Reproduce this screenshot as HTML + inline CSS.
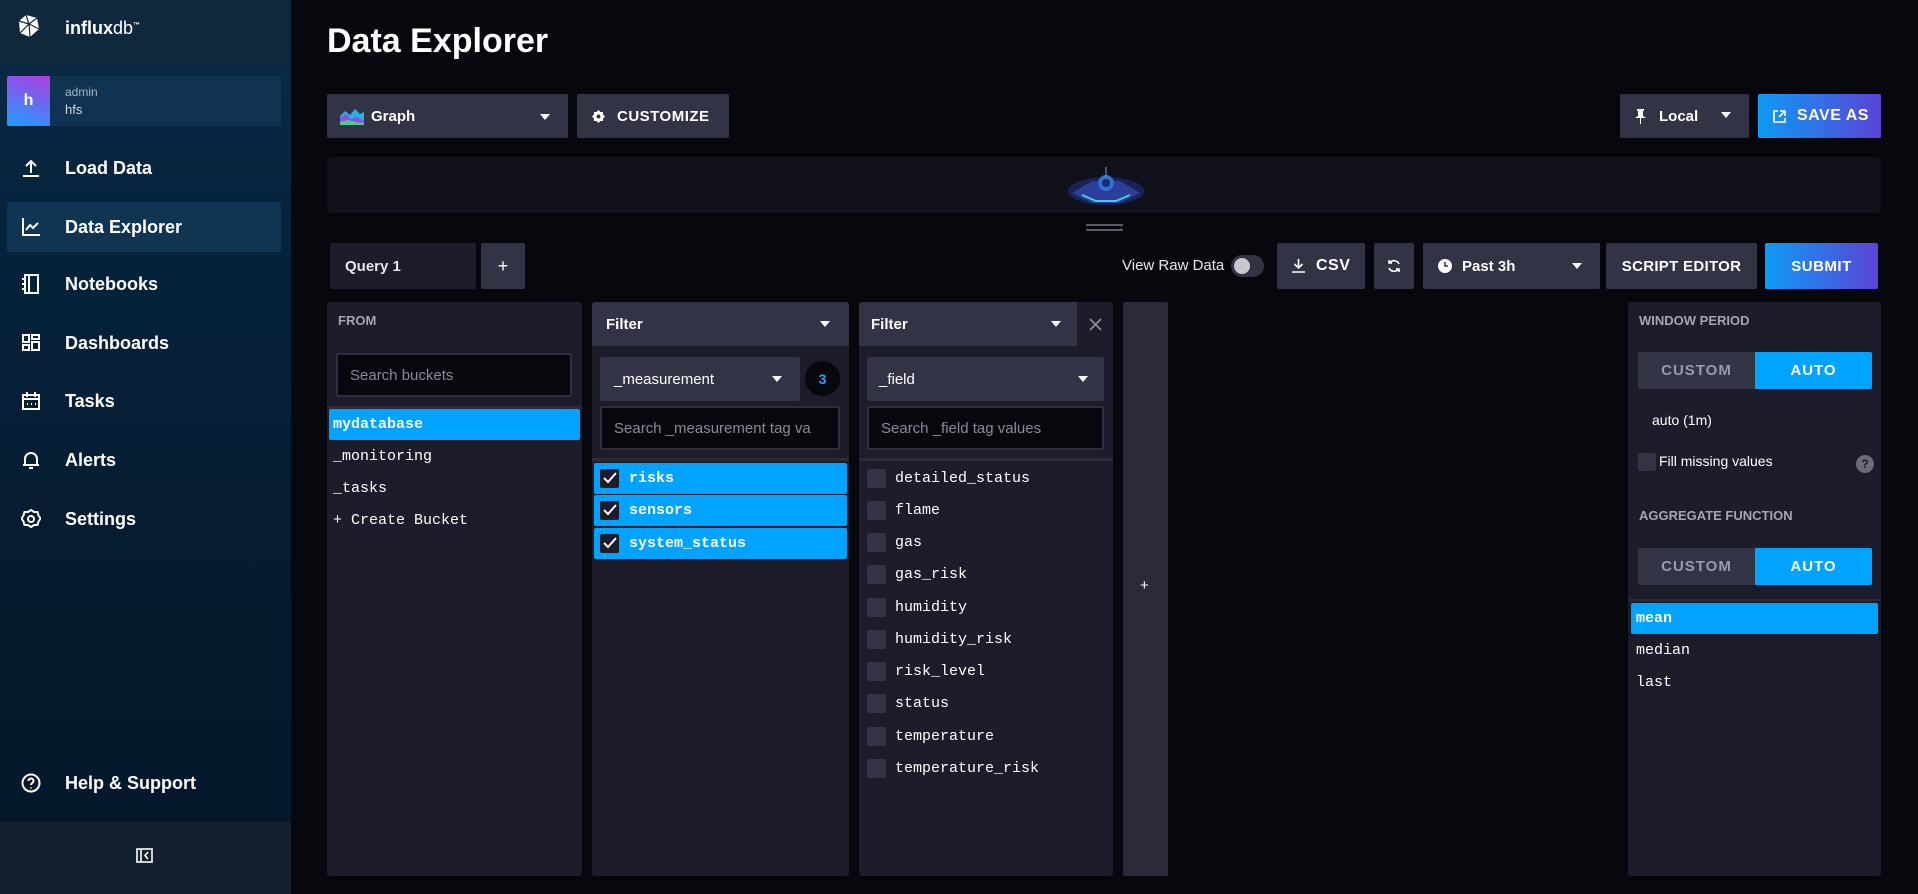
<!DOCTYPE html>
<html><head><meta charset="utf-8"><style>
*{box-sizing:border-box;margin:0;padding:0}
body{width:1918px;height:894px;background:#07080d;font-family:"Liberation Sans",sans-serif;color:#fff;position:relative;overflow:hidden}
.a{position:absolute}
.side{left:0;top:0;width:291px;height:894px;background:linear-gradient(180deg,#0d2a44 0%,#05223b 30%,#061a2e 70%,#06172a 100%)}
.nav{position:absolute;left:0;width:291px;height:48px;display:flex;align-items:center;font-weight:bold;font-size:18px}
.nav svg{position:absolute;left:21px}
.nav span{position:absolute;left:65px}
.btn{position:absolute;background:#333346;border-radius:2px;display:flex;align-items:center;font-weight:bold;font-size:15px;color:#fff}
.panel{position:absolute;top:302px;height:574px;background:#1c1c2a;border-radius:3px}
.mono{font-family:"Liberation Mono",monospace;font-size:15px}
.row{position:absolute;height:31px;display:flex;align-items:center;border-radius:2px}
.sel{background:#00a3ff;font-weight:bold}
.cb{width:19px;height:19px;background:#333346;border-radius:2px;position:absolute;left:6px}
.inp{position:absolute;background:#07080d;border:2px solid #2f2f3f;border-radius:2px;color:#8a8a99;font-size:15px;display:flex;align-items:center;padding-left:12px}
.hdr{position:absolute;background:#333346;display:flex;align-items:center;font-weight:bold;font-size:15px}
.caret{position:absolute;width:0;height:0;border-left:5px solid transparent;border-right:5px solid transparent;border-top:6px solid #fff}
.lbl{position:absolute;font-size:13px;font-weight:bold;color:#a4a4b4}
.tog{position:absolute;display:flex;height:37px;font-weight:bold;font-size:15px;letter-spacing:1px}
.tog div{width:117px;display:flex;align-items:center;justify-content:center}
</style></head><body>
<div class="a side">
 <div class="a" style="left:0;top:0;width:291px;height:62px;background:#10283d"></div>
 <svg class="a" style="left:18px;top:14px" width="22" height="24" viewBox="0 0 22 24"><polygon points="8,1 19,4 21,15 12,23 2,19 1,7" fill="#fff"/><path d="M8,1 L11,10 L19,4 M11,10 L1,7 M11,10 L12,23 M11,10 L21,15 M11,10 L2,19" stroke="#10283d" stroke-width="1.2" fill="none"/></svg>
 <div class="a" style="left:65px;top:18px;font-size:18px;font-weight:bold">influx<span style="font-weight:normal">db</span><sup style="font-size:7px">™</sup></div>
 <div class="a" style="left:7px;top:76px;width:274px;height:50px;background:#0f3350;border-radius:2px"></div>
 <div class="a" style="left:7px;top:76px;width:43px;height:50px;background:linear-gradient(200deg,#b03be0,#1ca0ff);border-radius:2px 0 0 2px;display:flex;align-items:center;justify-content:center;font-weight:bold;font-size:16px">h</div>
 <div class="a" style="left:65px;top:85px;font-size:12px;color:#a8b4c4">admin</div>
 <div class="a" style="left:65px;top:102px;font-size:13px;color:#cfd8e4">hfs</div>
 <div class="nav" style="top:144px"><svg width="20" height="20" viewBox="0 0 20 20" fill="none" stroke="#fff" stroke-width="2"><path d="M10 15V3M5 8l5-5 5 5M2 18h16"/></svg><span>Load Data</span></div>
 <div class="a" style="left:7px;top:202px;width:274px;height:50px;background:#0f3553;border-radius:2px"></div>
 <div class="nav" style="top:202px;height:50px"><svg width="20" height="20" viewBox="0 0 20 20" fill="none" stroke="#fff" stroke-width="2"><path d="M2 1v17h17M5 13l4-5 3 3 5-5"/></svg><span>Data Explorer</span></div>
 <div class="nav" style="top:260px"><svg width="20" height="20" viewBox="0 0 20 20" fill="none" stroke="#fff" stroke-width="2"><rect x="4" y="1" width="13" height="18"/><path d="M8 1v18M1 5h4M1 10h4M1 15h4"/></svg><span>Notebooks</span></div>
 <div class="nav" style="top:319px"><svg width="20" height="20" viewBox="0 0 20 20" fill="none" stroke="#fff" stroke-width="2"><rect x="2" y="2" width="6" height="7"/><rect x="11" y="2" width="7" height="4"/><rect x="2" y="12" width="6" height="5"/><rect x="11" y="9" width="7" height="8"/></svg><span>Dashboards</span></div>
 <div class="nav" style="top:377px"><svg width="20" height="20" viewBox="0 0 20 20" fill="none" stroke="#fff" stroke-width="2"><rect x="2" y="4" width="16" height="14"/><path d="M2 8h16M6 1v5M14 1v5M6 13h1M10 13h1M14 13h1"/></svg><span>Tasks</span></div>
 <div class="nav" style="top:436px"><svg width="20" height="20" viewBox="0 0 20 20" fill="none" stroke="#fff" stroke-width="2"><path d="M4 15V9a6 6 0 0112 0v6M2 15h16M8 18h4"/></svg><span>Alerts</span></div>
 <div class="nav" style="top:495px"><svg width="20" height="20" viewBox="0 0 20 20" fill="none" stroke="#fff" stroke-width="2"><path d="M10 1l3 2 3.5 0 1 3.5 2 3-2 3-1 3.5H13l-3 2-3-2H3.5l-1-3.5-2-3 2-3 1-3.5H7z"/><circle cx="10" cy="10" r="3"/></svg><span>Settings</span></div>
 <div class="nav" style="top:759px"><svg width="20" height="20" viewBox="0 0 20 20" fill="none" stroke="#fff" stroke-width="2"><circle cx="10" cy="10" r="8.5"/><path d="M7.5 8a2.5 2.5 0 115 0c0 2-2.5 2-2.5 4M10 14.5v1"/></svg><span>Help &amp; Support</span></div>
 <div class="a" style="left:0;top:822px;width:291px;height:72px;background:#13202e"></div>
 <svg class="a" style="left:136px;top:848px" width="17" height="15" viewBox="0 0 17 15" fill="none" stroke="#fff" stroke-width="1.6"><rect x="1" y="1" width="15" height="13"/><path d="M5 1v13M12 4l-3 3.5 3 3.5"/></svg>
</div>

<div class="a" style="left:327px;top:22px;font-size:34px;font-weight:bold">Data Explorer</div>

<div class="btn" style="left:327px;top:94px;width:241px;height:44px"><svg class="a" style="left:13px;top:14px" width="24" height="17" viewBox="0 0 24 17"><path d="M0 17V8l5-5 5 4 5-6 5 5 4-2v13z" fill="#22b2e6"/><path d="M0 17V10l6-4 5 5 6-2 7 4v4z" fill="#9b4ae3"/><path d="M0 17v-3l8-2 8 2 8 1v2z" fill="#4ccf8a"/></svg><span style="position:absolute;left:44px">Graph</span><div class="caret" style="left:213px;top:20px"></div></div>
<div class="btn" style="left:577px;top:94px;width:152px;height:44px"><svg class="a" style="left:15px;top:16px" width="13" height="13" viewBox="0 0 20 20"><path d="M10 0l3 3h4v4l3 3-3 3v4h-4l-3 3-3-3H3v-4l-3-3 3-3V3h4z" fill="#fff"/><circle cx="10" cy="10" r="3" fill="#333346"/></svg><span style="position:absolute;left:40px;letter-spacing:.5px">CUSTOMIZE</span></div>
<div class="btn" style="left:1620px;top:94px;width:129px;height:44px"><svg class="a" style="left:15px;top:15px" width="11" height="15" viewBox="0 0 11 15"><path d="M2 0h7v2H8v5l3 2H0l3-2V2H2zM5 9h1v6H5z" fill="#fff"/></svg><span style="position:absolute;left:39px">Local</span><div class="caret" style="left:101px;top:18px"></div></div>
<div class="btn" style="left:1758px;top:94px;width:123px;height:44px;background:linear-gradient(90deg,#0d9bf5,#5a43d6)"><svg class="a" style="left:15px;top:16px" width="13" height="13" viewBox="0 0 13 13" fill="none" stroke="#fff" stroke-width="1.6"><path d="M5 1H1v11h11V8M7 1h5v5M12 1L6 7"/></svg><span style="position:absolute;left:39px;top:13px;font-size:16px;letter-spacing:.5px">SAVE AS</span></div>

<div class="a" style="left:327px;top:157px;width:1554px;height:56px;background:#11111c;border-radius:4px"></div>
<svg class="a" style="left:1062px;top:163px" width="88" height="46" viewBox="0 0 88 46"><ellipse cx="44" cy="28" rx="38" ry="14" fill="#1b2a6e" opacity=".7"/><path d="M10 30l20-12 28 0 20 12-20 10H30z" fill="#2c3d9a"/><path d="M20 32l14 6 20 0 14-6" stroke="#3fd0e0" stroke-width="2" fill="none"/><circle cx="44" cy="20" r="8" fill="#2e6fd8"/><circle cx="44" cy="20" r="4" fill="#1a2a6a"/><path d="M44 4v10" stroke="#5ad" stroke-width="1"/></svg>
<div class="a" style="left:1086px;top:224px;width:37px;height:2px;background:#5a5a6a"></div>
<div class="a" style="left:1086px;top:229px;width:37px;height:2px;background:#5a5a6a"></div>

<div class="a" style="left:330px;top:243px;width:146px;height:46px;background:#1c1c2a;border-radius:2px;font-size:15px;font-weight:bold;display:flex;align-items:center;padding-left:15px;color:#e6e6ee">Query 1</div>
<div class="btn" style="left:481px;top:243px;width:44px;height:46px;justify-content:center;font-size:18px;font-weight:normal">+</div>
<div class="a" style="left:1122px;top:257px;font-size:15px;color:#e6e6ee">View Raw Data</div>
<div class="a" style="left:1231px;top:255px;width:33px;height:22px;background:#333346;border-radius:11px"></div>
<div class="a" style="left:1234px;top:258px;width:16px;height:16px;background:#c8c8d0;border-radius:50%"></div>
<div class="btn" style="left:1277px;top:243px;width:88px;height:46px"><svg class="a" style="left:15px;top:16px" width="13" height="14" viewBox="0 0 13 14" fill="none" stroke="#fff" stroke-width="1.6"><path d="M6.5 0v9M2.5 5l4 4 4-4M0 13h13"/></svg><span style="position:absolute;left:39px;font-size:16px;letter-spacing:.5px">CSV</span></div>
<div class="btn" style="left:1374px;top:243px;width:40px;height:46px"><svg class="a" style="left:13px;top:16px" width="14" height="14" viewBox="0 0 14 14" fill="none" stroke="#fff" stroke-width="1.6"><path d="M12 5A5.5 5.5 0 002.5 4M2 9a5.5 5.5 0 009.5 1M2 1v3h3M12 13v-3H9"/></svg></div>
<div class="btn" style="left:1423px;top:243px;width:177px;height:46px"><svg class="a" style="left:15px;top:16px" width="14" height="14" viewBox="0 0 14 14"><circle cx="7" cy="7" r="7" fill="#fff"/><path d="M7 3v4h3" stroke="#333346" stroke-width="1.6" fill="none"/></svg><span style="position:absolute;left:39px">Past 3h</span><div class="caret" style="left:149px;top:20px"></div></div>
<div class="btn" style="left:1606px;top:243px;width:151px;height:46px;justify-content:center;letter-spacing:.3px">SCRIPT EDITOR</div>
<div class="btn" style="left:1765px;top:243px;width:113px;height:46px;justify-content:center;background:linear-gradient(90deg,#0d9bf5,#5a43d6);letter-spacing:.5px">SUBMIT</div>

<div class="panel" style="left:327px;width:255px">
 <div class="lbl" style="left:11px;top:11px">FROM</div>
 <div class="inp" style="left:9px;top:51px;width:236px;height:44px">Search buckets</div>
 <div class="a" style="left:0;top:104px;width:255px;height:3px;background:#2b2b3a"></div>
 <div class="row sel mono" style="left:2px;top:107px;width:251px;padding-left:4px">mydatabase</div>
 <div class="row mono" style="left:2px;top:139px;padding-left:4px">_monitoring</div>
 <div class="row mono" style="left:2px;top:171px;padding-left:4px">_tasks</div>
 <div class="row mono" style="left:2px;top:203px;padding-left:4px">+ Create Bucket</div>
</div>
<div class="panel" style="left:592px;width:257px">
 <div class="hdr" style="left:0;top:0;width:257px;height:44px;border-radius:3px 3px 0 0;padding-left:14px">Filter<div class="caret" style="left:228px;top:19px"></div></div>
 <div class="hdr" style="left:8px;top:55px;width:200px;height:44px;border-radius:2px;padding-left:14px;font-weight:normal">_measurement<div class="caret" style="left:172px;top:19px"></div></div>
 <div class="a" style="left:213px;top:59px;width:35px;height:35px;border-radius:50%;background:#07080d;color:#1ca6ff;font-weight:bold;font-size:14px;display:flex;align-items:center;justify-content:center">3</div>
 <div class="inp" style="left:8px;top:104px;width:240px;height:44px;overflow:hidden;white-space:nowrap">Search _measurement tag va</div>
 <div class="a" style="left:0;top:156px;width:257px;height:3px;background:#2b2b3a"></div>
 <div class="row sel mono" style="left:2px;top:161px;width:253px"><div class="cb" style="background:#1c1c2a"></div><svg class="a" style="left:9px;top:9px" width="14" height="12" viewBox="0 0 14 12" fill="none" stroke="#fff" stroke-width="2"><path d="M1 6l4 4 8-9"/></svg><span style="position:absolute;left:35px">risks</span></div>
 <div class="row sel mono" style="left:2px;top:193px;width:253px"><div class="cb" style="background:#1c1c2a"></div><svg class="a" style="left:9px;top:9px" width="14" height="12" viewBox="0 0 14 12" fill="none" stroke="#fff" stroke-width="2"><path d="M1 6l4 4 8-9"/></svg><span style="position:absolute;left:35px">sensors</span></div>
 <div class="row sel mono" style="left:2px;top:226px;width:253px"><div class="cb" style="background:#1c1c2a"></div><svg class="a" style="left:9px;top:9px" width="14" height="12" viewBox="0 0 14 12" fill="none" stroke="#fff" stroke-width="2"><path d="M1 6l4 4 8-9"/></svg><span style="position:absolute;left:35px">system_status</span></div>
</div>
<div class="panel" style="left:859px;width:254px">
 <div class="hdr" style="left:0;top:0;width:218px;height:44px;border-radius:3px 0 0 0;padding-left:12px">Filter<div class="caret" style="left:192px;top:19px"></div></div>
 <svg class="a" style="left:230px;top:16px" width="13" height="13" viewBox="0 0 13 13" stroke="#8a8a99" stroke-width="1.8"><path d="M1 1l11 11M12 1L1 12"/></svg>
 <div class="hdr" style="left:8px;top:55px;width:237px;height:44px;border-radius:2px;padding-left:12px;font-weight:normal">_field<div class="caret" style="left:211px;top:19px"></div></div>
 <div class="inp" style="left:8px;top:104px;width:237px;height:44px">Search _field tag values</div>
 <div class="a" style="left:0;top:156px;width:254px;height:3px;background:#2b2b3a"></div>
 <div class="row mono" style="left:2px;top:161px;width:250px"><div class="cb"></div><span style="position:absolute;left:34px">detailed_status</span></div>
 <div class="row mono" style="left:2px;top:193px;width:250px"><div class="cb"></div><span style="position:absolute;left:34px">flame</span></div>
 <div class="row mono" style="left:2px;top:225px;width:250px"><div class="cb"></div><span style="position:absolute;left:34px">gas</span></div>
 <div class="row mono" style="left:2px;top:257px;width:250px"><div class="cb"></div><span style="position:absolute;left:34px">gas_risk</span></div>
 <div class="row mono" style="left:2px;top:290px;width:250px"><div class="cb"></div><span style="position:absolute;left:34px">humidity</span></div>
 <div class="row mono" style="left:2px;top:322px;width:250px"><div class="cb"></div><span style="position:absolute;left:34px">humidity_risk</span></div>
 <div class="row mono" style="left:2px;top:354px;width:250px"><div class="cb"></div><span style="position:absolute;left:34px">risk_level</span></div>
 <div class="row mono" style="left:2px;top:386px;width:250px"><div class="cb"></div><span style="position:absolute;left:34px">status</span></div>
 <div class="row mono" style="left:2px;top:419px;width:250px"><div class="cb"></div><span style="position:absolute;left:34px">temperature</span></div>
 <div class="row mono" style="left:2px;top:451px;width:250px"><div class="cb"></div><span style="position:absolute;left:34px">temperature_risk</span></div>
</div>
<div class="panel" style="left:1123px;width:45px;background:#2a2a3a;border-radius:2px"><div class="a" style="left:17px;top:275px;font-size:15px">+</div></div>
<div class="panel" style="left:1628px;width:253px">
 <div class="lbl" style="left:11px;top:11px">WINDOW PERIOD</div>
 <div class="tog" style="left:10px;top:50px"><div style="background:#333346;color:#9a9aaa;border-radius:2px 0 0 2px">CUSTOM</div><div style="background:#00a3ff;border-radius:0 2px 2px 0">AUTO</div></div>
 <div class="a" style="left:24px;top:110px;font-size:14px">auto (1m)</div>
 <div class="a" style="left:10px;top:151px;width:18px;height:18px;background:#333346;border-radius:2px"></div>
 <div class="a" style="left:31px;top:151px;font-size:14px">Fill missing values</div>
 <div class="a" style="left:228px;top:153px;width:18px;height:18px;border-radius:50%;background:#6a6a7a;color:#1c1c2a;font-size:12px;font-weight:bold;display:flex;align-items:center;justify-content:center">?</div>
 <div class="lbl" style="left:11px;top:206px">AGGREGATE FUNCTION</div>
 <div class="tog" style="left:10px;top:246px"><div style="background:#333346;color:#9a9aaa;border-radius:2px 0 0 2px">CUSTOM</div><div style="background:#00a3ff;border-radius:0 2px 2px 0">AUTO</div></div>
 <div class="a" style="left:0;top:297px;width:253px;height:2px;background:#2b2b3a"></div>
 <div class="row sel mono" style="left:3px;top:301px;width:247px;padding-left:5px">mean</div>
 <div class="row mono" style="left:3px;top:333px;padding-left:5px">median</div>
 <div class="row mono" style="left:3px;top:365px;padding-left:5px">last</div>
</div>
</body></html>
